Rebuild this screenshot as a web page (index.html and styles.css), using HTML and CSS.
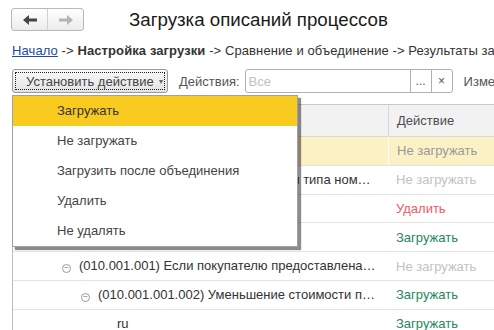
FILE: index.html
```html
<!DOCTYPE html>
<html lang="ru">
<head>
  <meta charset="UTF-8" />
  <title>Загрузка описаний процессов</title>
  <link rel="stylesheet" href="styles.css">
</head>
<body>
  <div class="header">
    <div class="nav-group">
      <span class="nav-btn back">
        <svg width="14" height="10" viewBox="0 0 14 10"><path d="M0 5 L6 0 V3.5 H14 V6.5 H6 V10 Z" fill="#444"/></svg>
      </span>
      <span class="nav-btn fwd">
        <svg width="14" height="10" viewBox="0 0 14 10"><path d="M14 5 L8 0 V3.5 H0 V6.5 H8 V10 Z" fill="#b4b4b4"/></svg>
      </span>
    </div>
    <h1 class="title">Загрузка описаний процессов</h1>
  </div>

  <div class="crumbs">
    <a href="#">Начало</a> -&gt; <b>Настройка загрузки</b> -&gt; Сравнение и объединение -&gt; Результаты загрузки
  </div>

  <div class="toolbar">
    <button class="action-btn"><span class="focus">Установить действие <span class="caret">&#9662;</span></span></button>
    <span class="label">Действия:</span>
    <div class="field">
      <span class="placeholder">Все</span>
      <span class="field-btn">...</span>
      <span class="field-btn">&times;</span>
    </div>
    <span class="label">Изменения</span>
  </div>

  <div class="grid">
    <div class="row head">
      <div class="cell name">Наименование</div>
      <div class="cell act">Действие</div>
    </div>
    <div class="row current">
      <div class="cell name"><span class="tree">&minus;</span>(010) Продажи</div>
      <div class="cell act gray">Не загружать</div>
    </div>
    <div class="row">
      <div class="cell name lvl1b">(010.001) Отражение реализации для типа номенклатуры</div>
      <div class="cell act pale">Не загружать</div>
    </div>
    <div class="row">
      <div class="cell name lvl1">(010.002) Возврат товаров</div>
      <div class="cell act red">Удалить</div>
    </div>
    <div class="row">
      <div class="cell name lvl1">(010.003) Скидки покупателям</div>
      <div class="cell act green">Загружать</div>
    </div>
    <div class="row">
      <div class="cell name lvl2"><span class="tree">&minus;</span>(010.001.001) Если покупателю предоставлена скидка после отгрузки</div>
      <div class="cell act pale">Не загружать</div>
    </div>
    <div class="row">
      <div class="cell name lvl3"><span class="tree">&minus;</span>(010.001.001.002) Уменьшение стоимости продажи</div>
      <div class="cell act green">Загружать</div>
    </div>
    <div class="row">
      <div class="cell name lvl4">ru</div>
      <div class="cell act green">Загружать</div>
    </div>
  </div>

  <div class="menu">
    <div class="menu-item active">Загружать</div>
    <div class="menu-item">Не загружать</div>
    <div class="menu-item">Загрузить после объединения</div>
    <div class="menu-item">Удалить</div>
    <div class="menu-item">Не удалять</div>
  </div>
</body>
</html>
```

FILE: styles.css
```css
* { box-sizing: border-box; }
body {
  margin: 0;
  font-family: 'Liberation Sans', Arial, sans-serif;
  font-size: 13px;
  color: #333;
  background: #fff;
  overflow: hidden;
  position: relative;
}
.header { display: flex; align-items: center; padding: 8px 11px 0; }
.nav-group {
  display: flex; width: 73px; height: 23px; flex-shrink: 0;
  border: 1px solid #b8b8b8; border-radius: 3px;
  background: linear-gradient(#fff, #ececec);
}
.nav-btn { flex: 1; display: flex; align-items: center; justify-content: center; }
.nav-btn.back { border-right: 1px solid #d0d0d0; }
.title {
  margin: 0 0 0 45px; font-size: 18.7px; font-weight: normal; color: #1a1a1a;
  line-height: 23px; white-space: nowrap;
}
.crumbs {
  padding: 12px 12px 0; white-space: nowrap; color: #333; line-height: 15px;
  letter-spacing: 0.1px;
}
.crumbs a { color: #1b4aa5; }
.crumbs b { color: #333; }
.toolbar {
  display: flex; align-items: center; padding: 11px 12px 0; white-space: nowrap;
}
.toolbar > * { flex-shrink: 0; }
.action-btn {
  width: 156px; height: 24px; padding: 2px;
  border: 1px solid #9a9a9a; border-radius: 3px;
  background: linear-gradient(#f8f8f8, #e4e4e4);
  font: inherit; color: #444;
}
.action-btn .focus {
  display: flex; align-items: center; height: 100%;
  border: 1px dotted #222; padding-left: 10px;
}
.caret { font-size: 8px; color: #666; margin-left: 5px; }
.label { color: #555; margin-left: 11px; }
.field {
  display: flex; width: 208px; height: 24px; margin-left: 5px;
  border: 1px solid #b0b0b0; border-radius: 3px;
}
.placeholder { flex: 1; color: #c0c0c0; padding: 4px 3px; }
.field-btn {
  width: 21px; border-left: 1px solid #b0b0b0; color: #555;
  display: flex; align-items: center; justify-content: center; font-size: 12px;
}
.grid {
  margin: 11px 0 0 12px; border-left: 1px solid #bdbdbd; border-top: 1px solid #c8c8c8;
}
.row { display: flex; height: 28.8px; border-bottom: 1px solid #e3e3e3; }
.row.head { height: 32px; background: #f2f2f2; border-bottom-color: #d8d8d8; }
.row.current { background: #fcf1c5; }
.cell {
  display: flex; align-items: center; white-space: nowrap; overflow: hidden;
}
.cell.name {
  display: block; width: 375px; padding: 0 12px 0 8px;
  line-height: 27.8px; text-overflow: ellipsis;
}
.cell.act { flex: 1; padding-left: 8px; }
.head .cell.act { border-left: 1px solid #d8d8d8; color: #4d4d4d; }
.current .cell.act { border-left: 1px solid #fff; }
.lvl1 { padding-left: 30px !important; }
.lvl1b { padding-left: 58px !important; }
.lvl2 { padding-left: 49px !important; }
.lvl3 { padding-left: 68px !important; }
.lvl4 { padding-left: 104px !important; }
.tree {
  display: inline-block; width: 9px; height: 9px; margin-right: 8px;
  border: 1px solid #999; border-radius: 50%;
  font-size: 8px; line-height: 6px; text-align: center; color: #777;
  vertical-align: 0;
}
.gray { color: #999; }
.pale { color: #c2c2c2; }
.red { color: #ee5a63; }
.green { color: #21885a; }
.menu {
  position: absolute; left: 12px; top: 95px; width: 286px;
  background: #fff; border: 1px solid #a0a0a0;
  box-shadow: 3px 3px 1px rgba(0, 0, 0, 0.45);
}
.menu-item { height: 30px; line-height: 30px; padding-left: 44px; color: #444; }
.menu-item.active { background: #f9cb21; color: #333; }
```
